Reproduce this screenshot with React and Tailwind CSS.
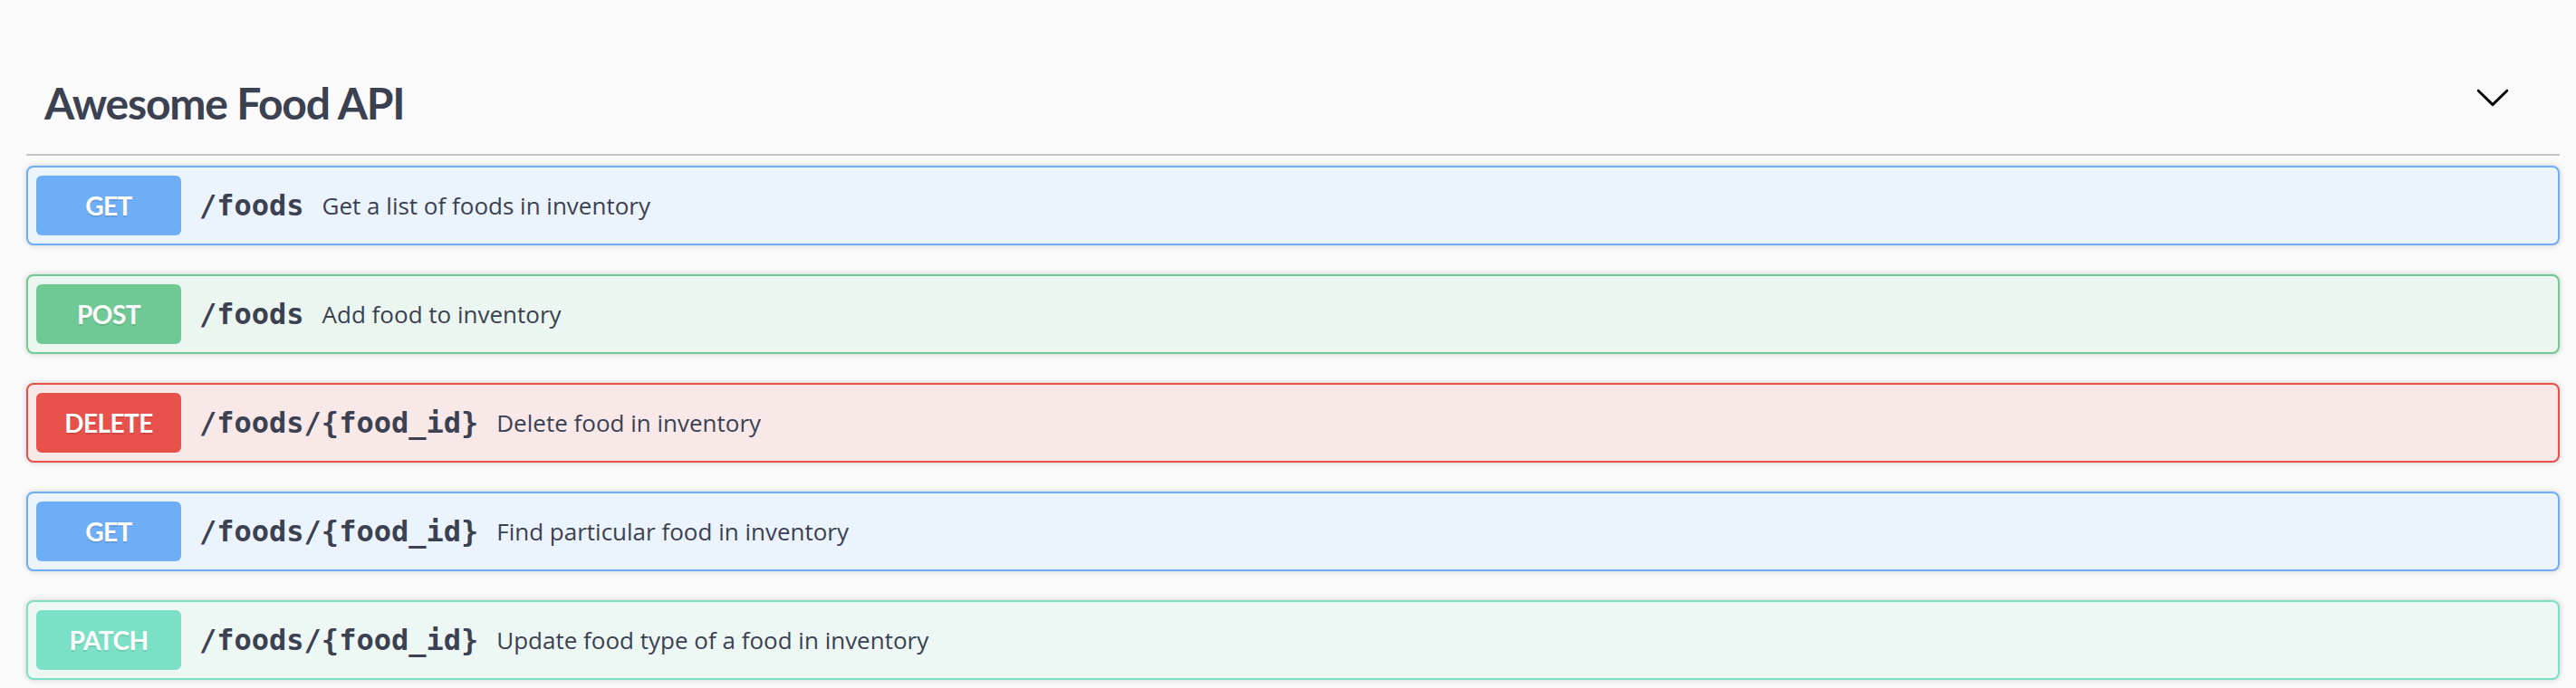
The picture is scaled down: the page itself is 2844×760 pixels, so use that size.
import React from 'react';

// Endpoint list shown under the tag header
const endpoints = [
  { method: 'GET', path: '/foods', desc: 'Get a list of foods in inventory' },
  { method: 'POST', path: '/foods', desc: 'Add food to inventory' },
  { method: 'DELETE', path: '/foods/{food_id}', desc: 'Delete food in inventory' },
  { method: 'GET', path: '/foods/{food_id}', desc: 'Find particular food in inventory' },
  { method: 'PATCH', path: '/foods/{food_id}', desc: 'Update food type of a food in inventory' },
];

const styles = {
  GET: { box: 'bg-[#ebf3fc] border-[#6daef6]', badge: 'bg-[#6daef6]' },
  POST: { box: 'bg-[#ecf6f0] border-[#6fc995]', badge: 'bg-[#6fc995]' },
  DELETE: { box: 'bg-[#f9e8e8] border-[#e8504a]', badge: 'bg-[#e8504a]' },
  PATCH: { box: 'bg-[#edf7f4] border-[#7be0c5]', badge: 'bg-[#7be0c5]' },
};

const Chevron = () => (
  <svg className="w-[40px] h-[40px] mb-[14px]" viewBox="0 0 20 20" fill="#000">
    <path d="M17.418 6.109c.272-.268.709-.268.979 0s.271.701 0 .969l-7.908 7.83c-.27.268-.707.268-.979 0l-7.908-7.83c-.27-.268-.27-.701 0-.969.271-.268.709-.268.979 0L10 13.25l7.418-7.141z" />
  </svg>
);

const App = () => {
  return (
    <div className="min-h-screen bg-[#fafafa] pt-[65px] pl-[29px] pr-[18px] text-[#3b4151]">
      {/* Tag header */}
      <div className="flex items-center justify-between pt-[20px] pb-[27px] pl-[20px] pr-[54px] border-b-2 border-[#c4c5c9] mb-[11px]">
        <h4 className="font-['Lato',sans-serif] font-bold text-[48px] leading-[58px] tracking-[-0.025em]">Awesome Food API</h4>
        <Chevron />
      </div>

      {/* Operations */}
      {endpoints.map((item, i) => (
        <div
          key={i}
          className={`flex items-center h-[88px] px-[9px] mb-[32px] border-2 rounded-[8px] shadow-[0_0_6px_rgba(0,0,0,0.19)] ${styles[item.method].box}`}
        >
          <span
            className={`flex items-center justify-center w-[160px] h-[66px] rounded-[6px] text-white font-['Lato',sans-serif] font-bold text-[28px] tracking-[-0.02em] [text-shadow:0_2px_0_rgba(0,0,0,0.1)] ${styles[item.method].badge}`}
          >
            {item.method}
          </span>
          <span className="px-[20px] font-['DejaVu_Sans_Mono',monospace] font-bold text-[32px]">{item.path}</span>
          <span className="font-['Open_Sans',sans-serif] text-[26px]">{item.desc}</span>
        </div>
      ))}
    </div>
  );
};

export default App;
